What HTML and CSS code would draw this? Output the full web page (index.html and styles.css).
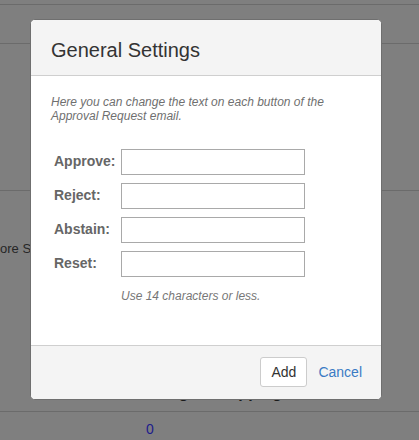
FILE: index.html
```html
<!DOCTYPE html>
<html>
<head>
<meta charset="utf-8">
<link rel="stylesheet" href="styles.css">
</head>
<body>
<div class="page">
  <div class="row row-a"></div>
  <div class="row row-b"></div>
  <div class="row row-c"></div>
  <div class="row row-d">
    <div class="bg-text">ore Sites and Settings</div>
    <div class="bg-head">Delegate Mapping</div>
  </div>
  <div class="row row-e">
    <a class="bg-link">0</a>
  </div>
</div>

<div class="modal">
  <div class="modal-header">
    <h4 class="modal-title">General Settings</h4>
  </div>
  <div class="modal-body">
    <p class="desc">Here you can change the text on each button of the<br>Approval Request email.</p>
    <div class="form">
      <label class="lbl">Approve:</label><input class="field" type="text">
      <label class="lbl">Reject:</label><input class="field" type="text">
      <label class="lbl">Abstain:</label><input class="field" type="text">
      <label class="lbl">Reset:</label><input class="field" type="text">
      <span></span><p class="hint">Use 14 characters or less.</p>
    </div>
  </div>
  <div class="modal-footer">
    <button class="btn" type="button">Add</button>
    <a class="cancel">Cancel</a>
  </div>
</div>
</body>
</html>
```

FILE: styles.css
```css
html, body {
  margin: 0;
  padding: 0;
}
body {
  width: 419px;
  height: 440px;
  overflow: hidden;
  background: #7f7f7f;
  font-family: "Liberation Sans", Arial, sans-serif;
  position: relative;
}
.page {
  display: flex;
  flex-direction: column;
}
.row {
  border-bottom: 1px solid #6b6b6b;
  box-sizing: content-box;
}
.row-a { height: 4px; }
.row-b { height: 38px; }
.row-c { height: 146px; }
.row-d { height: 220px; }
.row-e { height: 28px; border-bottom: none; }

.bg-text {
  margin-top: 50px;
  font-size: 13px;
  line-height: 15px;
  color: #262626;
  white-space: nowrap;
}
.bg-head {
  margin-top: 128px;
  padding-left: 145px;
  font-size: 16px;
  line-height: 18px;
  font-weight: bold;
  color: #1a1a1a;
  white-space: nowrap;
}
.bg-link {
  display: block;
  margin-top: 9px;
  padding-left: 146px;
  font-size: 14px;
  line-height: 16px;
  color: #1c1c8c;
}

.modal {
  position: absolute;
  left: 30px;
  top: 19px;
  width: 352px;
  height: 381px;
  box-sizing: border-box;
  border: 1px solid #6f6f6f;
  border-radius: 5px;
  background: #fff;
  display: flex;
  flex-direction: column;
  overflow: hidden;
}
.modal-header {
  background: #f4f4f4;
  border-bottom: 1px solid #cfcfcf;
  padding: 19px 20px 14px;
}
.modal-title {
  margin: 0;
  font-size: 20px;
  line-height: 22px;
  font-weight: normal;
  color: #333;
}
.modal-body {
  flex: 1;
  padding: 19px 20px 0;
}
.desc {
  margin: 0;
  font-size: 12px;
  line-height: 14px;
  font-style: italic;
  color: #6f6f6f;
}
.form {
  margin-top: 26px;
  margin-left: 3px;
  display: grid;
  grid-template-columns: 67px 184px;
  row-gap: 8px;
  align-items: center;
}
.lbl {
  font-size: 14px;
  font-weight: bold;
  color: #666;
  line-height: 16px;
  margin-top: -2px;
}
.field {
  width: 184px;
  height: 26px;
  box-sizing: border-box;
  margin: 0;
  border: 1px solid #a9a9a9;
  border-radius: 0;
  padding: 2px 4px;
  font-family: inherit;
  font-size: 13px;
  background: #fff;
}
.hint {
  margin: 4px 0 0;
  font-size: 12px;
  line-height: 14px;
  font-style: italic;
  color: #777;
}
.modal-footer {
  background: #f4f4f4;
  border-top: 1px solid #cfcfcf;
  padding: 11px 19px 12px;
  display: flex;
  justify-content: flex-end;
  align-items: center;
  gap: 11px;
}
.btn {
  width: 47px;
  height: 30px;
  box-sizing: border-box;
  border: 1px solid #ccc;
  border-radius: 3px;
  background: #fff;
  font-family: inherit;
  font-size: 14px;
  color: #333;
  padding: 0;
}
.cancel {
  font-size: 14px;
  color: #3a7bc4;
}
```
